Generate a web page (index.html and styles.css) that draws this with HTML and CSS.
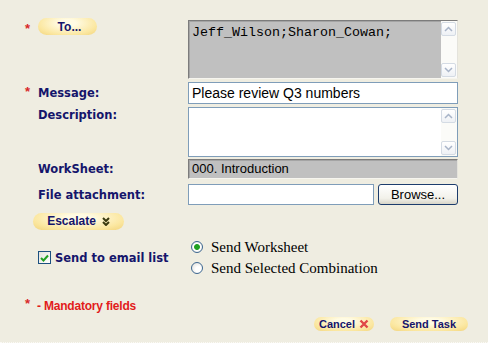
FILE: index.html
```html
<!DOCTYPE html>
<html>
	<head>
		<meta charset="UTF-8"/>
		<title>Send Task</title>
		<link rel="stylesheet" href="styles.css">
	</head>
	<body>
		<div class="Form">
			<div class="Row RowTo">
				<span class="Star">*</span>
				<div class="Label"><span class="Pill PillTo">To...</span></div>
				<div class="Box BoxGray BoxTall">
					<div class="BoxText Mono">Jeff_Wilson;Sharon_Cowan;</div>
					<div class="Scroll">
						<span class="ScrollBtn">
							<svg width="9" height="6" viewBox="0 0 9 6"><path d="M1 5 L4.5 1.5 L8 5" fill="none" stroke="#a8b4c8" stroke-width="1.5"/></svg>
						</span>
						<span class="ScrollBtn">
							<svg width="9" height="6" viewBox="0 0 9 6"><path d="M1 1 L4.5 4.5 L8 1" fill="none" stroke="#a8b4c8" stroke-width="1.5"/></svg>
						</span>
					</div>
				</div>
			</div>
			<div class="Row RowMessage">
				<span class="Star">*</span>
				<div class="Label">Message:</div>
				<div class="Box BoxBlue BoxLine"><div class="BoxText">Please review Q3 numbers</div></div>
			</div>
			<div class="Row RowDesc">
				<span class="Star"></span>
				<div class="Label">Description:</div>
				<div class="Box BoxBlue BoxDesc">
					<div class="BoxText"></div>
					<div class="Scroll">
						<span class="ScrollBtn">
							<svg width="9" height="6" viewBox="0 0 9 6"><path d="M1 5 L4.5 1.5 L8 5" fill="none" stroke="#a8b4c8" stroke-width="1.5"/></svg>
						</span>
						<span class="ScrollBtn">
							<svg width="9" height="6" viewBox="0 0 9 6"><path d="M1 1 L4.5 4.5 L8 1" fill="none" stroke="#a8b4c8" stroke-width="1.5"/></svg>
						</span>
					</div>
				</div>
			</div>
			<div class="Row RowSheet">
				<span class="Star"></span>
				<div class="Label">WorkSheet:</div>
				<div class="Box BoxGray BoxSheet"><div class="BoxText Small">000. Introduction</div></div>
			</div>
			<div class="Row RowFile">
				<span class="Star"></span>
				<div class="Label">File attachment:</div>
				<div class="FileField">
					<div class="Box BoxBlue BoxFile"></div>
					<span class="Browse">Browse...</span>
				</div>
			</div>
			<div class="EscalateRow">
				<span class="Pill PillEscalate">Escalate
					<svg class="Chevrons" width="8" height="9" viewBox="0 0 8 9"><path d="M1 1 L4 4 L7 1 M1 5 L4 8 L7 5" fill="none" stroke="#3a3a10" stroke-width="2"/></svg>
				</span>
			</div>
			<div class="SendRow">
				<label class="Check">
					<span class="CheckBox">
						<svg width="9" height="8" viewBox="0 0 9 8"><path d="M1 4 L3.5 6.5 L8 1.5" fill="none" stroke="#21a121" stroke-width="2"/></svg>
					</span>
					Send to email list
				</label>
				<div class="Radios">
					<label class="Radio"><span class="RadioDot On"></span>Send Worksheet</label>
					<label class="Radio"><span class="RadioDot"></span>Send Selected Combination</label>
				</div>
			</div>
			<div class="Mandatory">
				<span class="Star">*</span>
				<span class="MandText">- Mandatory fields</span>
			</div>
			<div class="Actions">
				<span class="Pill PillSmall">Cancel
					<svg class="Cross" width="10" height="10" viewBox="0 0 10 10"><path d="M1.5 1.5 L8.5 8.5 M8.5 1.5 L1.5 8.5" stroke="#e04848" stroke-width="2.4"/></svg>
				</span>
				<span class="Pill PillSmall PillSend">Send Task</span>
			</div>
		</div>
	</body>
</html>
```

FILE: styles.css
```css
* {
	margin: 0;
	padding: 0;
	box-sizing: border-box;
}
html, body {
	height: 100%;
	background: #efede1;
}
body {
	font: 14px "Liberation Sans", Arial, sans-serif;
	overflow: hidden;
}
.Form {
	padding: 18px 30px 0 24px;
	height: 343px;
	border-bottom: 1px dotted #fbfaf5;
}
.Row {
	display: grid;
	grid-template-columns: 14px 150px 270px;
	align-items: center;
}
.Star {
	align-self: start;
	color: #d82828;
	font: bold 13px "Liberation Sans", Arial, sans-serif;
	line-height: 12px;
	padding-left: 1px;
}
.Label {
	font: bold 11.5px "DejaVu Sans", Verdana, sans-serif;
	color: #15156b;
}
.RowTo {
	align-items: start;
}
.RowTo .Star {
	margin-top: 5px;
}
.RowTo .Box {
	margin-top: 2px;
}
.RowMessage {
	margin-top: 3px;
}
.RowMessage .Star {
	margin-top: 4px;
}
.RowDesc {
	margin-top: 3px;
	align-items: start;
}
.RowDesc .Label {
	margin-top: 1px;
}
.RowSheet {
	margin-top: 2px;
}
.RowFile {
	margin-top: 5px;
}

/* fields */
.Box {
	display: flex;
	background: #fff;
}
.BoxText {
	flex: 1;
	padding: 4px 3px 0;
	color: #000;
	white-space: nowrap;
}
.Mono {
	font: 13.33px "Liberation Mono", "Courier New", monospace;
}
.Small {
	font-size: 13px;
}
.BoxGray {
	background: #c0c0c0;
	border: 1px solid;
	border-color: #7c7c7c #e4e3dc #f6f5ef #7c7c7c;
	box-shadow: inset 1px 1px 0 #a4a4a4;
}
.BoxBlue {
	border: 1px solid #7f9db9;
}
.BoxTall {
	height: 59px;
}
.BoxLine {
	height: 22px;
}
.BoxLine .BoxText {
	padding-top: 2px;
}
.BoxDesc {
	height: 50px;
}
.BoxSheet {
	height: 20px;
}
.BoxSheet .BoxText {
	padding-top: 1px;
}
.Scroll {
	width: 16px;
	background: #fbfbf8;
	display: flex;
	flex-direction: column;
	justify-content: space-between;
	padding: 1px 1px 1px 0;
}
.ScrollBtn {
	display: flex;
	align-items: center;
	justify-content: center;
	width: 15px;
	height: 14px;
	border: 1px solid #d4dbe4;
	border-radius: 2px;
	background: linear-gradient(#ffffff, #eef1f5);
}
.FileField {
	display: flex;
	gap: 4px;
}
.BoxFile {
	width: 186px;
	height: 21px;
}
.Browse {
	width: 80px;
	height: 21px;
	border: 1px solid #1c3c6c;
	border-radius: 3px;
	background: linear-gradient(#ffffff, #f2f1ea 70%, #d8d5c8);
	font-size: 13px;
	line-height: 19px;
	text-align: center;
	color: #000;
}

/* pill buttons */
.Pill {
	display: inline-flex;
	align-items: center;
	justify-content: center;
	gap: 6px;
	height: 17px;
	border-radius: 9px;
	background: radial-gradient(ellipse at 50% 30%, #fffbe4 20%, #fbe7a0 70%, #f2d47c);
	font: bold 12px "Liberation Sans", Arial, sans-serif;
	color: #15156b;
	white-space: nowrap;
}
.PillTo {
	width: 59px;
	padding-left: 4px;
}
.EscalateRow {
	margin-top: 7px;
	padding-left: 9px;
}
.PillEscalate {
	width: 91px;
}
.PillSmall {
	height: 14px;
	font-size: 11px;
	gap: 4px;
}
.PillSmall:first-child {
	width: 60px;
}
.PillSend {
	width: 78px;
}

/* send options */
.SendRow {
	display: flex;
	align-items: center;
	margin-top: 8px;
	padding-left: 14px;
}
.Check {
	display: flex;
	align-items: center;
	gap: 4px;
	width: 153px;
	font: bold 11.5px "DejaVu Sans", Verdana, sans-serif;
	color: #15156b;
}
.CheckBox {
	display: flex;
	align-items: center;
	justify-content: center;
	width: 13px;
	height: 13px;
	border: 1px solid #1c5180;
	background: linear-gradient(135deg, #e4e3dc, #ffffff);
}
.Radios {
	display: flex;
	flex-direction: column;
	gap: 2px;
}
.Radio {
	display: flex;
	align-items: center;
	gap: 8px;
	font: 15px "Liberation Serif", "Times New Roman", serif;
	color: #000;
	height: 19px;
}
.RadioDot {
	width: 12px;
	height: 12px;
	border: 1px solid #3c6690;
	border-radius: 50%;
	background: radial-gradient(circle at 65% 65%, #ffffff 30%, #dcdbd4);
}
.RadioDot.On {
	background: radial-gradient(circle, #21a121 0 2.5px, #9fd79f 3px, #ffffff 3.5px, #ffffff 40%, #dcdbd4);
}

/* footer */
.Mandatory {
	display: flex;
	align-items: flex-start;
	margin-top: 21px;
}
.Mandatory .Star {
	width: 13px;
	margin-top: -1px;
}
.MandText {
	color: #e21b1b;
	font: bold 12px "Liberation Sans", Arial, sans-serif;
	letter-spacing: -0.2px;
}
.Actions {
	display: flex;
	justify-content: flex-end;
	gap: 16px;
	margin-top: 4px;
	margin-right: -10px;
}
```
